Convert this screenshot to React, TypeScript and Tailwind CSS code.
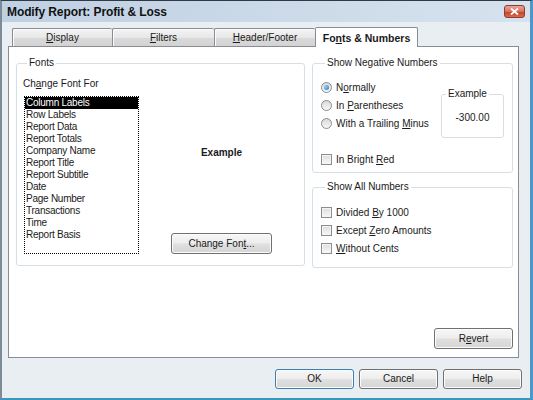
import type { ReactNode } from 'react';

const font = { fontFamily: '"Liberation Sans", Arial, sans-serif' };

const btn =
  'flex items-center justify-center rounded-[3px] border text-[10px] leading-[12px] text-[#1a1a1a] bg-[linear-gradient(to_bottom,#f7f7f7_0%,#ededed_48%,#e0e0e0_52%,#d5d5d5_100%)] shadow-[inset_0_0_0_1px_#fcfcfc]';

function Radio({ checked, children }: { checked?: boolean; children: ReactNode }) {
  return (
    <div className="flex h-[18px] items-center gap-[4px]">
      <span className="flex h-[11px] w-[11px] items-center justify-center rounded-full border border-[#8b8d8f] bg-[linear-gradient(to_bottom,#d8d8d8,#f8f8f8)]">
        {checked && (
          <span className="h-[5px] w-[5px] rounded-full bg-[radial-gradient(circle_at_35%_35%,#8fd1ff,#1f6fc4)]" />
        )}
      </span>
      <span>{children}</span>
    </div>
  );
}

function Check({ children }: { children: ReactNode }) {
  return (
    <div className="flex h-[18px] items-center gap-[4px]">
      <span className="h-[11px] w-[11px] border border-[#8b8d8f] bg-[linear-gradient(to_bottom,#dcdcdc,#f9f9f9)] shadow-[inset_0_0_0_1px_#f4f4f4]" />
      <span>{children}</span>
    </div>
  );
}

const items = [
  'Column Labels',
  'Row Labels',
  'Report Data',
  'Report Totals',
  'Company Name',
  'Report Title',
  'Report Subtitle',
  'Date',
  'Page Number',
  'Transactions',
  'Time',
  'Report Basis',
];

const tabs: { label: ReactNode; w: string }[] = [
  { label: <><u>D</u>isplay</>, w: 'w-[100px]' },
  { label: <><u>F</u>ilters</>, w: 'w-[102px]' },
  { label: <><u>H</u>eader/Footer</>, w: 'w-[101px]' },
];

export default function App() {
  return (
    <div
      style={font}
      className="flex h-[400px] w-[533px] flex-col overflow-hidden border-t border-l-2 border-r-[3px] border-b-2 border-t-[#2f3a44] border-l-[#7d8b99] border-r-[#4f97c6] border-b-[#3b98bb] bg-[#e9eef2] text-[10px] text-[#1a1a1a]"
    >
      {/* title bar */}
      <div className="flex h-[21px] items-center bg-[linear-gradient(to_right,#bfd0e3,#cddbe9_60%,#d6e2ee)] pl-[5px] pr-[5px]">
        <span className="text-[12px] font-bold leading-[14px] tracking-[-0.1px] text-[#111]">Modify Report: Profit &amp; Loss</span>
        <span className="ml-auto flex h-[13px] w-[21px] items-center justify-center rounded-[3px] border border-[#8d3b2e] bg-[linear-gradient(to_bottom,#eba597,#d9705c_50%,#c2412b_52%,#d86a4f)]">
          <svg width="9" height="7" viewBox="0 0 9 7">
            <path d="M1 0.5 L8 6.5 M8 0.5 L1 6.5" stroke="#fff" strokeWidth="1.8" />
          </svg>
        </span>
      </div>

      {/* tabs */}
      <div className="flex h-[24px] items-end pl-[10px] pt-[5px]">
        {tabs.map((t, i) => (
          <div
            key={i}
            className={`${t.w} flex h-[18px] items-center justify-center border border-r-0 border-b-0 border-[#898c95] bg-[linear-gradient(to_bottom,#f4f4f4,#e7e7e7_50%,#dadada_52%,#d3d3d3)] leading-[12px] shadow-[inset_1px_1px_0_#fbfbfb] rounded-t-[2px]`}
          >
            {t.label}
          </div>
        ))}
        <div className="relative z-10 mb-[-1px] flex h-[20px] w-[103px] items-center justify-center rounded-t-[2px] border border-b-0 border-[#898c95] bg-white text-[10.5px] font-bold leading-[12px]">
          Fo<u>n</u>ts &amp; Numbers
        </div>
      </div>

      {/* panel */}
      <div className="ml-[6px] flex h-[312px] w-[511px] flex-col border border-[#898c95] bg-white">
        <div className="flex items-start gap-[7px] pl-[7px] pt-[10px]">
          {/* Fonts group */}
          <fieldset className="h-[209px] w-[289px] rounded-[3px] border border-[#d5dfe5] pl-[6px] pt-[9px]">
            <legend className="ml-[4px] px-[2px] leading-[12px]">Fonts</legend>
            <div className="leading-[12px]">
              Ch<u>a</u>nge Font For
            </div>
            <div className="mt-[6px] flex">
              <div className="ml-[1px] h-[158px] w-[115px] border border-dotted border-black tracking-[-0.25px]">
                {items.map((it, i) => (
                  <div
                    key={it}
                    className={`h-[12px] pl-[1px] leading-[12px] ${i === 0 ? 'bg-black text-white' : ''}`}
                  >
                    {it}
                  </div>
                ))}
              </div>
              <div className="flex flex-1 flex-col items-center">
                <div className="mt-[51px] font-bold leading-[12px]">Example</div>
                <div className={`${btn} mt-auto h-[21px] w-[101px] border-[#707070]`}>
                  Change Fon<u>t</u>...
                </div>
              </div>
            </div>
          </fieldset>

          {/* right column */}
          <div className="flex w-[201px] flex-col">
            <fieldset className="h-[116px] rounded-[3px] border border-[#d5dfe5] pl-[8px] pr-[8px] pt-[9px]">
              <legend className="ml-[4px] px-[2px] leading-[12px]">Show Negative Numbers</legend>
              <div className="flex items-start">
                <div className="flex flex-col">
                  <Radio checked>
                    N<u>o</u>rmally
                  </Radio>
                  <Radio>
                    In <u>P</u>arentheses
                  </Radio>
                  <Radio>
                    With a Trailing <u>M</u>inus
                  </Radio>
                </div>
                <fieldset className="ml-auto mt-[10px] h-[50px] w-[63px] rounded-[3px] border border-[#d5dfe5] pt-[12px]">
                  <legend className="ml-[4px] px-[2px] leading-[12px]">Example</legend>
                  <div className="text-center leading-[12px]">-300.00</div>
                </fieldset>
              </div>
              <div className="mt-[12px]">
                <Check>
                  In Bright <u>R</u>ed
                </Check>
              </div>
            </fieldset>

            <fieldset className="mt-[8px] h-[87px] rounded-[3px] border border-[#d5dfe5] pl-[8px] pt-[10px]">
              <legend className="ml-[4px] px-[2px] leading-[12px]">Show All Numbers</legend>
              <Check>
                Divided <u>B</u>y 1000
              </Check>
              <Check>
                Except <u>Z</u>ero Amounts
              </Check>
              <Check>
                <u>W</u>ithout Cents
              </Check>
            </fieldset>
          </div>
        </div>

        <div className="mt-auto flex justify-end pb-[8px] pr-[5px]">
          <div className={`${btn} h-[21px] w-[79px] border-[#707070]`}>
            R<u>e</u>vert
          </div>
        </div>
      </div>

      {/* dialog buttons */}
      <div className="mt-[11px] flex justify-end gap-[5px] pr-[8px]">
        <div className={`${btn} h-[20px] w-[79px] border-[#3c7fb1] shadow-[inset_0_0_0_1px_#c6e6f8]`}>OK</div>
        <div className={`${btn} h-[20px] w-[79px] border-[#707070]`}>Cancel</div>
        <div className={`${btn} h-[20px] w-[79px] border-[#707070]`}>Help</div>
      </div>
    </div>
  );
}
